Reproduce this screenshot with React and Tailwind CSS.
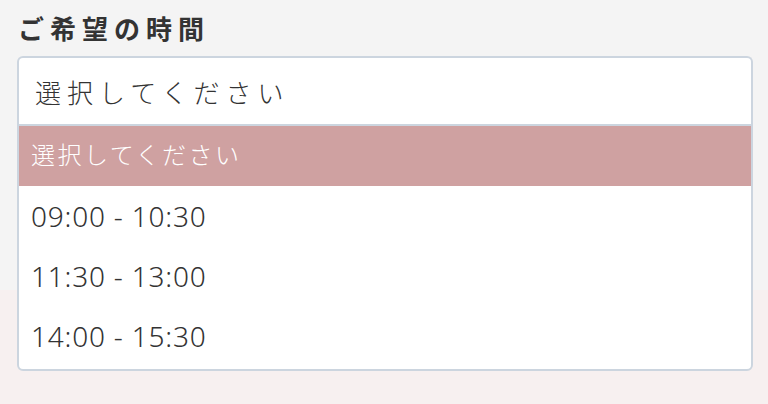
import React from "react";

const jp = { fontFamily: '"Noto Sans CJK JP", "Noto Sans", sans-serif' };
const num = { fontFamily: '"Noto Sans", "Noto Sans CJK JP", sans-serif' };

export default function App() {
  const options = ["09:00 - 10:30", "11:30 - 13:00", "14:00 - 15:30"];
  return (
    <div className="flex h-[404px] w-[768px] flex-col overflow-hidden" style={jp}>
      <div className="relative z-10 h-[290px] shrink-0 bg-[#f4f4f4] pl-[17px] pr-[15px] pt-[10px]">
        <div className="pl-[1px] text-[26px] font-bold leading-[36px] tracking-[6px] text-[#333]">
          ご希望の時間
        </div>
        <div className="relative mt-[10px]">
          <div className="flex h-[68px] items-center rounded-t-[6px] border-2 border-b-0 border-[#ccd5df] bg-white pl-[16px] text-[26px] font-light tracking-[6px] text-[#333]">
            選択してください
          </div>
          <div className="absolute left-0 right-0 top-full rounded-b-[6px] border-2 border-[#ccd5df] bg-white pb-[3px]">
            <div className="flex h-[60px] items-center bg-[#cfa1a1] pb-[4px] pl-[12px] text-[24px] font-light tracking-[2.5px] text-white">
              選択してください
            </div>
            {options.map((o) => (
              <div
                key={o}
                style={num}
                className="flex h-[60px] items-center pl-[12px] text-[28px] font-light tracking-[0.8px] text-[#333]"
              >
                {o}
              </div>
            ))}
          </div>
        </div>
      </div>
      <div className="flex-1 bg-[#f7f0f0]" />
    </div>
  );
}
